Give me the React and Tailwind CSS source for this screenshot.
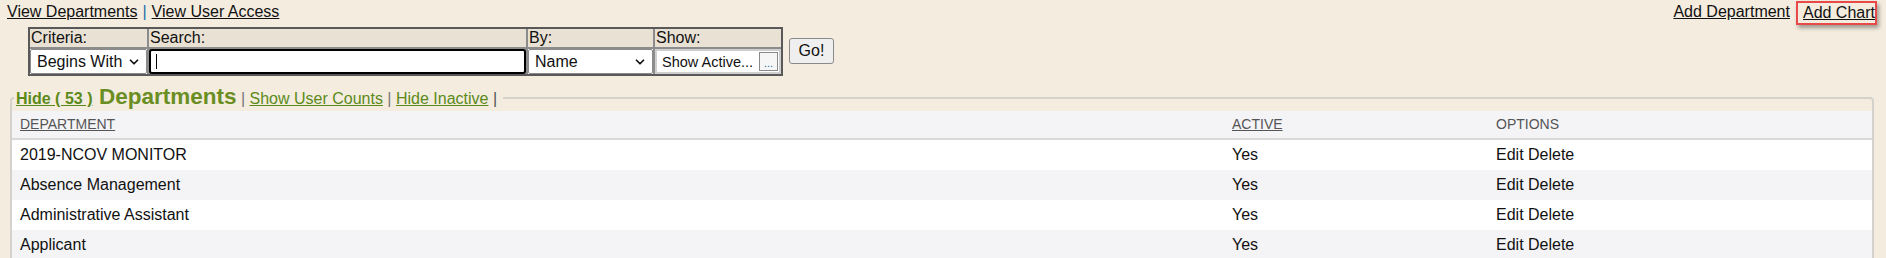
import { ChevronDown } from 'lucide-react';

const rows = [
  { name: '2019-NCOV MONITOR', active: 'Yes' },
  { name: 'Absence Management', active: 'Yes' },
  { name: 'Administrative Assistant', active: 'Yes' },
  { name: 'Applicant', active: 'Yes' },
];

function FakeSelect({ label, className = '' }) {
  return (
    <div className={`flex items-center justify-between bg-white border border-[#8a8a8a] rounded-[2px] pl-[6px] pr-[5px] h-[25px] text-[16px] leading-[18px] ${className}`}>
      <span>{label}</span>
      <ChevronDown size={14} strokeWidth={3} />
    </div>
  );
}

export default function App() {
  return (
    <div className="min-h-screen bg-[#f4ecdf] font-['Liberation_Sans',Arial,sans-serif] text-[#111]">
      {/* top links */}
      <div className="flex justify-between items-start pl-[7px] pr-[9px] pt-[1px] h-[27px] text-[16px] leading-[18px]">
        <div className="pt-[2px]">
          <a className="underline">View Departments</a>
          <span className="text-[#1d6fa5] mx-[5px]">|</span>
          <a className="underline">View User Access</a>
        </div>
        <div className="flex items-start gap-[6px]">
          <a className="underline pt-[2px]">Add Department</a>
          <span className="border-2 border-[#e84a4a] pl-[5px] py-[1px] shadow-[2px_3px_4px_rgba(0,0,0,0.35)]">
            <a className="underline">Add Chart</a>
          </span>
        </div>
      </div>

      {/* filter */}
      <div className="flex items-start ml-[28px]">
        <div className="border-2 border-[#595959] bg-[#8c8c8c] grid grid-cols-[117px_377px_125px_126px] gap-[2px]">
          {['Criteria:', 'Search:', 'By:', 'Show:'].map((h) => (
            <div key={h} className="bg-[#e9e2d4] h-[18px] text-[16px] leading-[18px] pl-[1px]">
              {h}
            </div>
          ))}
          <div className="bg-white">
            <FakeSelect label="Begins With" />
          </div>
          <div className="bg-white flex items-center border-2 border-black rounded-[3px] h-[25px] pl-[5px]">
            <div className="w-[1px] h-[15px] bg-black" />
          </div>
          <div className="bg-white">
            <FakeSelect label="Name" />
          </div>
          <div className="bg-[#cfcfcf] p-[2px] h-[25px]">
            <div className="bg-white h-full flex items-center justify-between pl-[5px] pr-[1px]">
              <span className="text-[14.5px] leading-[16px]">Show Active...</span>
              <span className="w-[19px] h-[19px] border border-[#8a8a8a] bg-[#f6f6f6] text-[11px] leading-[14px] text-[#1d6fa5] flex items-end justify-center">
                ...
              </span>
            </div>
          </div>
        </div>
        <button className="ml-[6px] mt-[11px] w-[45px] h-[26px] bg-[#efefef] border border-[#8a8a8a] rounded-[3px] text-[16px] leading-[18px]">
          Go!
        </button>
      </div>

      {/* departments */}
      <fieldset className="mt-[8px] ml-[10px] mr-[12px] border-2 border-[#d4d2cc] rounded-[4px]">
        <legend className="ml-[2px] pl-[2px] pr-[6px] leading-[25px]">
          <a className="underline text-[#5b8a1a] font-bold text-[16px]">Hide ( 53 )</a>{' '}
          <span className="ml-[2px] text-[#6b8e23] font-bold text-[22.5px]">Departments</span>
          <span className="text-[#777] text-[16px]"> | </span>
          <a className="underline text-[#5b8a1a] text-[16px]">Show User Counts</a>
          <span className="text-[#777] text-[16px]"> | </span>
          <a className="underline text-[#5b8a1a] text-[16px]">Hide Inactive</a>
          <span className="text-[#555] text-[16px]"> |</span>
        </legend>

        <div className="grid grid-cols-[1212px_264px_1fr] bg-[#f4f4f6] h-[29px] items-center border-b-2 border-[#d9d9d9] text-[14px] text-[#555]">
          <span className="pl-[8px] underline">DEPARTMENT</span>
          <span className="pl-[8px] underline">ACTIVE</span>
          <span className="pl-[8px]">OPTIONS</span>
        </div>

        {rows.map((r, i) => (
          <div
            key={r.name}
            className={`grid grid-cols-[1212px_264px_1fr] h-[30px] items-center text-[16px] ${i % 2 ? 'bg-[#f4f4f6]' : 'bg-white'}`}
          >
            <span className="pl-[8px]">{r.name}</span>
            <span className="pl-[8px]">{r.active}</span>
            <span className="pl-[8px]">Edit Delete</span>
          </div>
        ))}
      </fieldset>
    </div>
  );
}
